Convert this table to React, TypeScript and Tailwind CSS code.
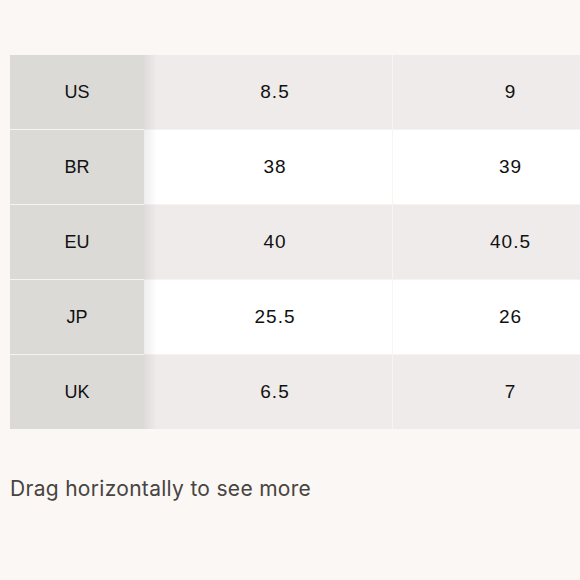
const rows: [string, string, string][] = [
  ["US", "8.5", "9"],
  ["BR", "38", "39"],
  ["EU", "40", "40.5"],
  ["JP", "25.5", "26"],
  ["UK", "6.5", "7"],
];

export default function App() {
  return (
    <div className="h-[580px] w-[580px] overflow-hidden bg-[#faf7f5] pl-[10px] pt-[55px]">
      <div className="relative flex flex-col gap-px overflow-hidden bg-[#f6f3f1] font-['Liberation_Sans',sans-serif] text-[#111]">
        {rows.map(([label, a, b], i) => (
          <div
            key={label}
            className={`flex h-[74px] ${i % 2 === 0 ? "bg-[#eeebea]" : "bg-white"}`}
          >
            <div className="flex w-[134px] shrink-0 items-center justify-center bg-[#dcdad7] text-[18px]">
              {label}
            </div>
            <div className="flex w-[248px] shrink-0 items-center justify-center pl-[14px] text-[19px] tracking-[1px]">
              {a}
            </div>
            <div className="flex w-[235px] shrink-0 items-center justify-center border-l border-[#f7f5f3] pl-[1px] text-[19px] tracking-[1px]">
              {b}
            </div>
          </div>
        ))}
        <div className="pointer-events-none absolute inset-y-0 left-[134px] w-[13px] bg-gradient-to-r from-black/[0.07] to-transparent" />
      </div>
      <p className="mt-[44px] font-['Inter',sans-serif] text-[21px] tracking-[0.3px] text-[#48443f]">
        Drag horizontally to see more
      </p>
    </div>
  );
}
